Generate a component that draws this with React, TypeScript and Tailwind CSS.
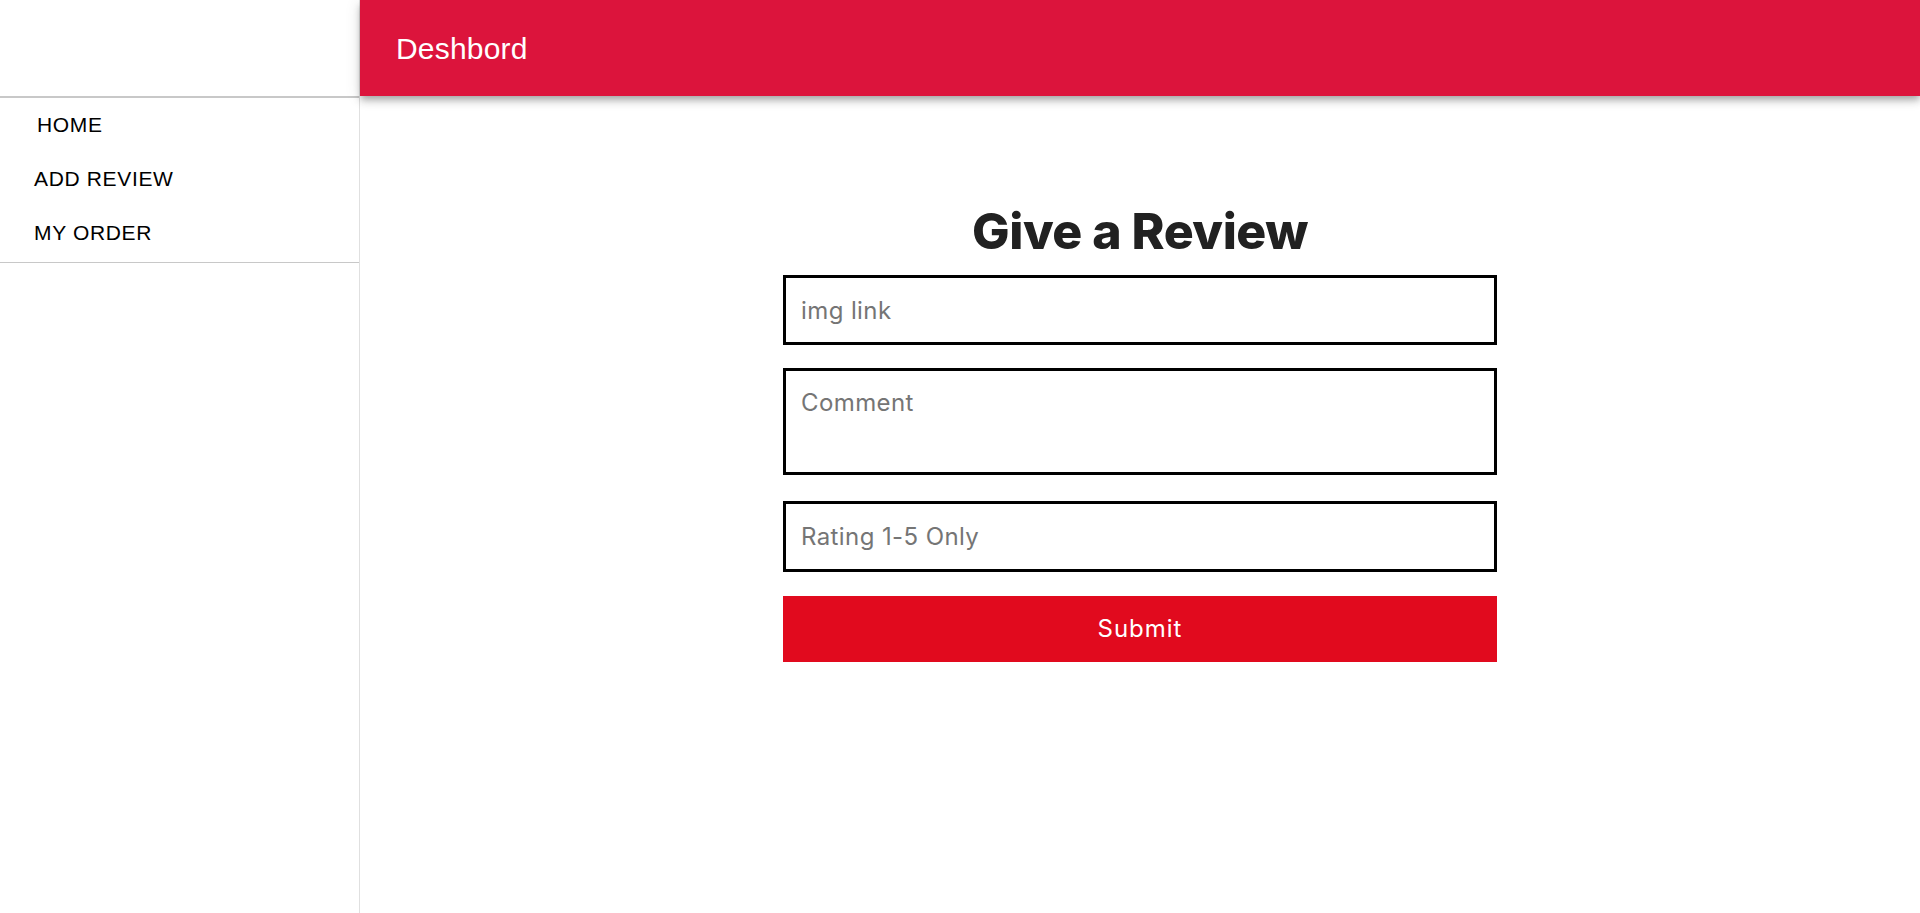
import { useState } from "react";

const NAV = [
  { label: "HOME", pad: "pl-[37px]" },
  { label: "ADD REVIEW", pad: "pl-[34px]" },
  { label: "MY ORDER", pad: "pl-[34px]" },
];

export default function App() {
  const [img, setImg] = useState("");
  const [comment, setComment] = useState("");
  const [rating, setRating] = useState("");

  return (
    <div className="flex min-h-[913px] bg-white">
      {/* sidebar */}
      <aside className="w-[360px] shrink-0 border-r border-[#e0e0e0] font-['Liberation_Sans',Arial,sans-serif]">
        <div className="h-[96px]" />
        <div className="h-[1.5px] bg-[#c8c8c8]" />
        <ul className="pb-[2px]">
          {NAV.map((item) => (
            <li
              key={item.label}
              className={`flex h-[54px] items-center ${item.pad} text-[21px] tracking-[0.65px] text-black`}
            >
              {item.label}
            </li>
          ))}
        </ul>
        <div className="h-[1.5px] bg-[#c8c8c8]" />
      </aside>

      <div className="flex flex-1 flex-col">
        <header className="relative z-10 flex h-[96px] items-center bg-[#dc143c] pl-[36px] shadow-[0_3px_6px_-1.5px_rgba(0,0,0,0.2),0_6px_7.5px_0_rgba(0,0,0,0.14),0_1.5px_15px_0_rgba(0,0,0,0.12)]">
          <h6 className="font-['Liberation_Sans',Arial,sans-serif] text-[30px] tracking-[0.2px] text-white">
            Deshbord
          </h6>
        </header>

        <main className="flex flex-col items-center pt-[105px] font-['Inter',sans-serif]">
          <h1 className="mb-[14px] text-[50px] font-extrabold leading-[60px] tracking-[-0.5px] text-[#212121]">
            Give a Review
          </h1>
          <form
            className="flex w-[714px] flex-col"
            onSubmit={(e) => e.preventDefault()}
          >
            <input
              className="h-[70px] w-full border-[3px] border-black px-[15px] text-[24px] tracking-[0.4px] text-black outline-none placeholder:text-[#757575]"
              placeholder="img link"
              value={img}
              onChange={(e) => setImg(e.target.value)}
            />
            <textarea
              className="mt-[23px] h-[107px] w-full resize-none border-[3px] border-black px-[15px] pt-[14px] text-[24px] leading-[36px] tracking-[0.4px] text-black outline-none placeholder:text-[#757575]"
              placeholder="Comment"
              value={comment}
              onChange={(e) => setComment(e.target.value)}
            />
            <input
              className="mt-[26px] h-[71px] w-full border-[3px] border-black px-[15px] text-[24px] tracking-[0.4px] text-black outline-none placeholder:text-[#757575]"
              placeholder="Rating 1-5 Only"
              value={rating}
              onChange={(e) => setRating(e.target.value)}
            />
            <button
              type="submit"
              className="mt-[24px] h-[66px] w-full bg-[#e10a1e] text-[24px] tracking-[1px] text-white"
            >
              Submit
            </button>
          </form>
        </main>
      </div>
    </div>
  );
}
